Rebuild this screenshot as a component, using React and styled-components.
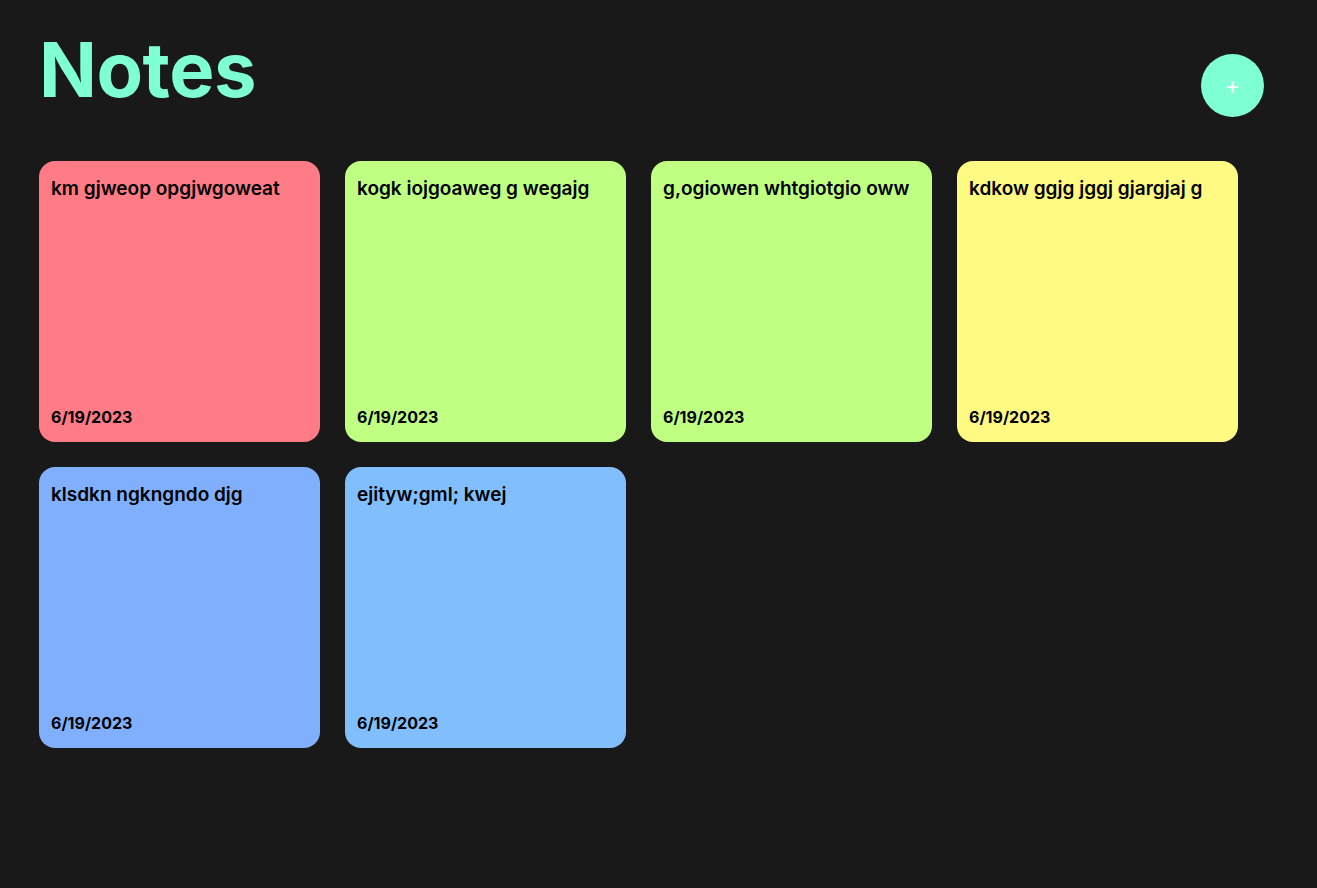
import styled, { createGlobalStyle } from "styled-components";

const notes = [
  { id: 1, text: "km gjweop opgjwgoweat", date: "6/19/2023", color: "#ff7b86" },
  { id: 2, text: "kogk iojgoaweg g wegajg", date: "6/19/2023", color: "#bfff81" },
  { id: 3, text: "g,ogiowen whtgiotgio oww", date: "6/19/2023", color: "#bfff81" },
  { id: 4, text: "kdkow ggjg jggj gjargjaj g", date: "6/19/2023", color: "#fffa81" },
  { id: 5, text: "klsdkn ngkngndo djg", date: "6/19/2023", color: "#80affe" },
  { id: 6, text: "ejityw;gml; kwej", date: "6/19/2023", color: "#80befe" },
];

function App() {
  return (
    <>
      <GlobalStyle />
      <Page>
        <Header>
          <Title>Notes</Title>
          <AddButton>+</AddButton>
        </Header>
        <Grid>
          {notes.map((note) => (
            <Card key={note.id} $bg={note.color}>
              <NoteText>{note.text}</NoteText>
              <NoteDate>{note.date}</NoteDate>
            </Card>
          ))}
        </Grid>
      </Page>
    </>
  );
}

const GlobalStyle = createGlobalStyle`
  html, body {
    margin: 0;
    background: #191919;
    font-family: Inter, "Noto Sans", sans-serif;
  }
  #root {
    min-height: 100vh;
  }
`;

const Page = styled.div`
  padding: 23px 53px 0 39px;
`;

const Header = styled.header`
  display: flex;
  justify-content: space-between;
  align-items: flex-start;
  height: 93px;
`;

const Title = styled.h1`
  margin: 0;
  font-size: 76px;
  font-weight: 700;
  line-height: normal;
  color: #7fffd4;
  letter-spacing: -0.5px;
`;

const AddButton = styled.button`
  margin-top: 31px;
  width: 63px;
  height: 63px;
  border: none;
  border-radius: 50%;
  background: #7fffd4;
  color: #ffffff;
  font-family: Inter, sans-serif;
  font-size: 24px;
  line-height: 1;
  padding: 0;
  cursor: pointer;
`;

const Grid = styled.div`
  margin-top: 45px;
  display: grid;
  grid-template-columns: repeat(4, 281px);
  gap: 25px;
`;

const Card = styled.div`
  height: 281px;
  box-sizing: border-box;
  padding: 16px 12px 15px;
  border-radius: 16px;
  background: ${(p) => p.$bg};
  display: flex;
  flex-direction: column;
  justify-content: space-between;
  color: #000000;
`;

const NoteText = styled.p`
  margin: 0;
  font-size: 19px;
  font-weight: 600;
`;

const NoteDate = styled.span`
  font-size: 16px;
  font-weight: 700;
`;

export default App;
